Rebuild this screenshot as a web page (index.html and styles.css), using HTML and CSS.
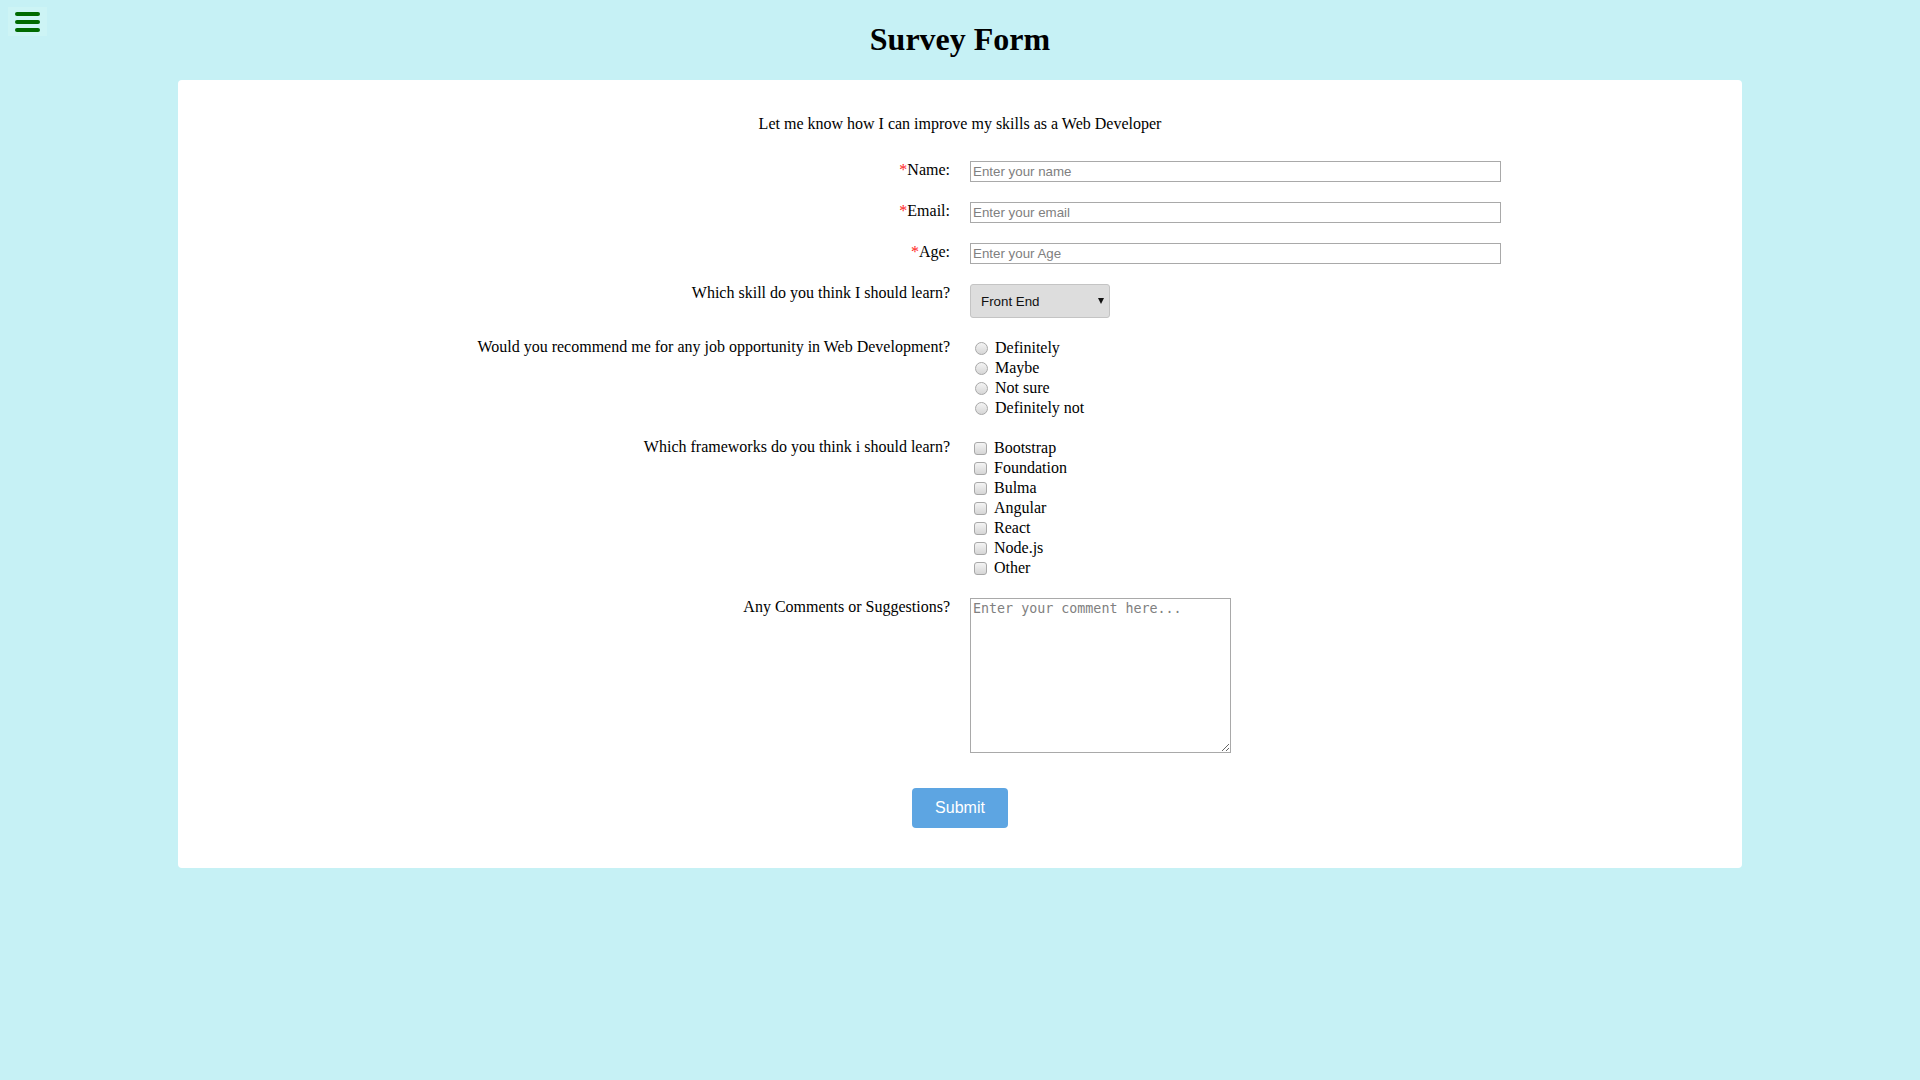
FILE: index.html
```
<!DOCTYPE html>
<html lang="en">
<head>
<meta charset="utf-8">
<title>Survey Form</title>
<link rel="stylesheet" href="styles.css">
</head>
<body>
<button class="menu-btn" aria-label="Menu">
  <svg width="25" height="20" viewBox="0 0 25 20">
    <line x1="2" y1="2" x2="23" y2="2" />
    <line x1="2" y1="10" x2="23" y2="10" />
    <line x1="2" y1="18" x2="23" y2="18" />
  </svg>
</button>
<h1 class="title">Survey Form</h1>
<main class="card">
  <p class="intro">Let me know how I can improve my skills as a Web Developer</p>
  <form class="form">
    <div class="row">
      <label class="lbl" for="name"><span class="req">*</span>Name:</label>
      <div class="ctl"><input class="text" id="name" type="text" placeholder="Enter your name"></div>
    </div>
    <div class="row">
      <label class="lbl" for="email"><span class="req">*</span>Email:</label>
      <div class="ctl"><input class="text" id="email" type="email" placeholder="Enter your email"></div>
    </div>
    <div class="row">
      <label class="lbl" for="age"><span class="req">*</span>Age:</label>
      <div class="ctl"><input class="text" id="age" type="number" placeholder="Enter your Age"></div>
    </div>
    <div class="row">
      <label class="lbl" for="skill">Which skill do you think I should learn?</label>
      <div class="ctl">
        <div class="select-wrap">
          <select class="select" id="skill">
            <option>Front End</option>
            <option>Back End</option>
            <option>Full Stack</option>
          </select>
        </div>
      </div>
    </div>
    <div class="row">
      <div class="lbl">Would you recommend me for any job opportunity in Web Development?</div>
      <div class="ctl">
        <div class="opt"><label><input class="radio" type="radio" name="rec"> Definitely</label></div>
        <div class="opt"><label><input class="radio" type="radio" name="rec"> Maybe</label></div>
        <div class="opt"><label><input class="radio" type="radio" name="rec"> Not sure</label></div>
        <div class="opt"><label><input class="radio" type="radio" name="rec"> Definitely not</label></div>
      </div>
    </div>
    <div class="row">
      <div class="lbl">Which frameworks do you think i should learn?</div>
      <div class="ctl">
        <div class="opt"><label><input class="check" type="checkbox"> Bootstrap</label></div>
        <div class="opt"><label><input class="check" type="checkbox"> Foundation</label></div>
        <div class="opt"><label><input class="check" type="checkbox"> Bulma</label></div>
        <div class="opt"><label><input class="check" type="checkbox"> Angular</label></div>
        <div class="opt"><label><input class="check" type="checkbox"> React</label></div>
        <div class="opt"><label><input class="check" type="checkbox"> Node.js</label></div>
        <div class="opt"><label><input class="check" type="checkbox"> Other</label></div>
      </div>
    </div>
    <div class="row">
      <label class="lbl" for="comment">Any Comments or Suggestions?</label>
      <div class="ctl"><textarea class="area" id="comment" placeholder="Enter your comment here..."></textarea></div>
    </div>
    <div class="actions">
      <button class="submit" type="submit">Submit</button>
    </div>
  </form>
</main>
</body>
</html>
```
FILE: styles.css
```
html, body {
  margin: 0;
  padding: 0;
}
body {
  background: #c6f1f5;
  font-family: "Liberation Serif", "Times New Roman", serif;
  font-size: 16px;
  color: #000;
  min-height: 1080px;
}
.menu-btn {
  position: absolute;
  left: 8px;
  top: 7px;
  width: 39px;
  height: 29px;
  padding: 0;
  border: none;
  background: #cdf4f5;
  display: flex;
  align-items: center;
  justify-content: center;
  cursor: pointer;
}
.menu-btn svg {
  display: block;
}
.menu-btn line {
  stroke: #006a00;
  stroke-width: 4;
  stroke-linecap: round;
}
.title {
  margin: 21px 0 22px;
  text-align: center;
  font-size: 32px;
  font-weight: bold;
  line-height: 37px;
}
.card {
  width: 1564px;
  margin: 0 auto;
  background: #fff;
  border-radius: 4px;
  padding: 35px 0 40px;
  box-sizing: border-box;
}
.intro {
  margin: 0 0 28px;
  text-align: center;
  line-height: 18px;
}
.form {
  display: flex;
  flex-direction: column;
}
.row {
  display: flex;
  align-items: flex-start;
  margin-bottom: 20px;
}
.lbl {
  flex: 0 0 50%;
  box-sizing: border-box;
  padding-right: 10px;
  text-align: right;
  line-height: 18px;
}
.ctl {
  flex: 0 0 50%;
  box-sizing: border-box;
  padding-left: 10px;
}
.req {
  color: #f22;
}
.text {
  display: block;
  width: 531px;
  height: 21px;
  box-sizing: border-box;
  border: 1px solid #a9a9a9;
  padding: 1px 2px;
  font-family: "Liberation Sans", Arial, sans-serif;
  font-size: 13.33px;
  margin: 0;
  background: #fff;
}
.text::placeholder {
  color: #808080;
}
.select-wrap {
  position: relative;
  width: 140px;
  height: 34px;
}
.select-wrap::after {
  content: "";
  position: absolute;
  right: 6px;
  top: 14px;
  border-left: 3px solid transparent;
  border-right: 3px solid transparent;
  border-top: 6px solid #111;
  pointer-events: none;
}
.select {
  appearance: none;
  -webkit-appearance: none;
  width: 140px;
  height: 34px;
  box-sizing: border-box;
  background: #ddd;
  border: 1px solid #c4c4c4;
  border-radius: 3px;
  padding: 0 10px;
  font-family: "Liberation Sans", Arial, sans-serif;
  font-size: 13.33px;
  color: #111;
  margin: 0;
}
.opt {
  height: 20px;
  line-height: 20px;
}
.opt label {
  display: flex;
  align-items: center;
  gap: 4px;
}
.radio,
.check {
  appearance: none;
  -webkit-appearance: none;
  width: 13px;
  height: 13px;
  box-sizing: border-box;
  border: 1px solid #a8a8a8;
  background: linear-gradient(#f4f4f4, #d6d6d6);
  flex: 0 0 13px;
}
.radio {
  border-radius: 50%;
  margin: 1px 3px 0 5px;
}
.check {
  border-radius: 3px;
  margin: 0 3px 0 4px;
}
.area {
  display: block;
  width: 261px;
  height: 155px;
  box-sizing: border-box;
  border: 1px solid #a9a9a9;
  padding: 2px;
  margin: 0;
  font-family: "DejaVu Sans Mono", "Liberation Mono", monospace;
  font-size: 13.33px;
  resize: both;
}
.area::placeholder {
  color: #808080;
}
.actions {
  display: flex;
  justify-content: center;
  padding-top: 15px;
}
.submit {
  width: 96px;
  height: 40px;
  border: none;
  border-radius: 4px;
  background: #5da5e2;
  color: #fff;
  font-family: "Liberation Sans", Arial, sans-serif;
  font-size: 16px;
  cursor: pointer;
}
```
